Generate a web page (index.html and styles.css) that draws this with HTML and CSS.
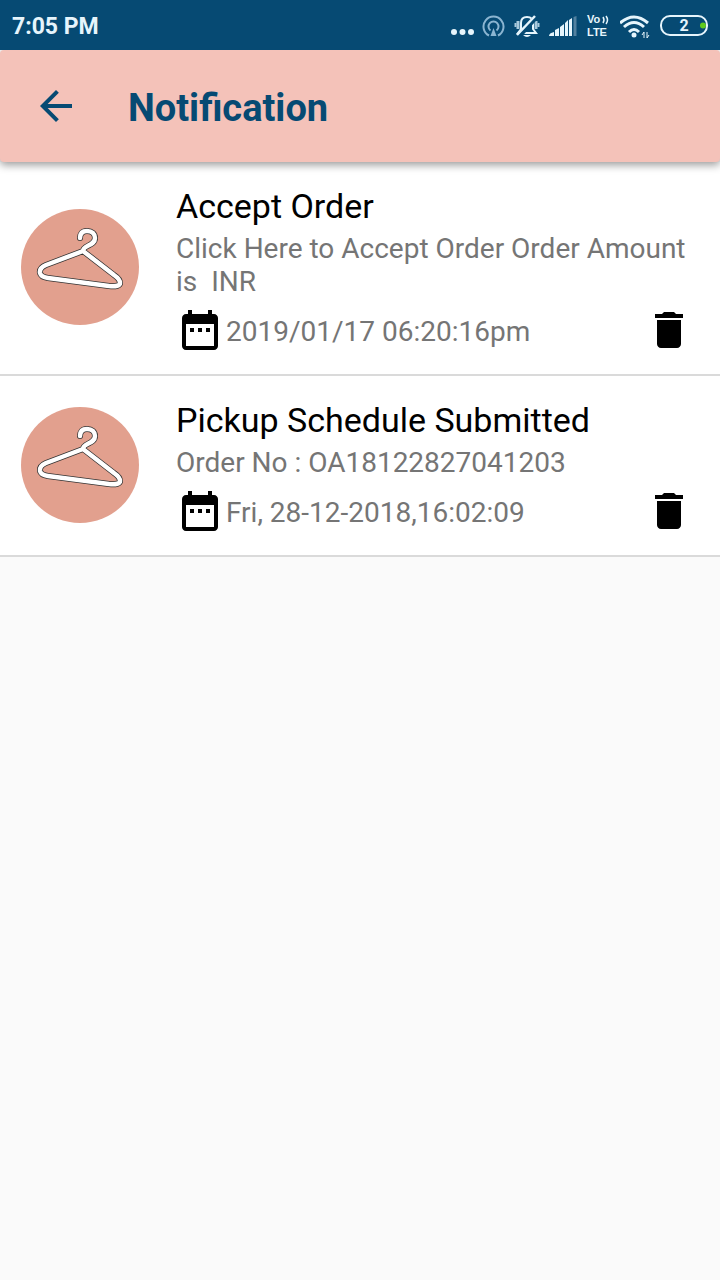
FILE: index.html
```html
<!DOCTYPE html>
<html lang="en">
    <head>
        <meta charset="UTF-8" />
        <meta
            name="viewport"
            content="width=device-width, initial-scale=1.0"
        />
        <title>Notification</title>
        <link rel="stylesheet" href="styles.css">
    </head>
    <body>
        <!-- shared icons -->
        <svg class="symbols" aria-hidden="true">
            <symbol id="hanger" viewBox="0 0 118 118">
                <ellipse cx="59" cy="59" rx="59" ry="58" fill="#e2a08e" />
                <g fill="none" stroke-linejoin="round" stroke-linecap="round">
                    <path d="M59 30C59 26 61 23 66 23C71 23 74 26 74 30C74 38 62 37 62 43L25 57Q18 60 19 65Q20 69 27 70L88 78Q99 79 99 75Q99 71 93 67L62 43" stroke="#333" stroke-width="6" />
                    <path d="M59 30C59 26 61 23 66 23C71 23 74 26 74 30C74 38 62 37 62 43L25 57Q18 60 19 65Q20 69 27 70L88 78Q99 79 99 75Q99 71 93 67L62 43" stroke="#fff" stroke-width="4.500" />
                </g>
            </symbol>
            <symbol id="calendar" viewBox="0 0 24 24">
                <path d="M9 11H7v2h2v-2zm4 0h-2v2h2v-2zm4 0h-2v2h2v-2zm2-7h-1V2h-2v2H8V2H6v2H5c-1.11 0-1.99.9-1.99 2L3 20c0 1.1.89 2 2 2h14c1.1 0 2-.9 2-2V6c0-1.1-.9-2-2-2zm0 16H5V9h14v11z" />
            </symbol>
            <symbol id="trash" viewBox="0 0 24 24">
                <path d="M6 19c0 1.1.9 2 2 2h8c1.1 0 2-.9 2-2V7H6v12zM19 4h-3.500l-1-1h-5l-1 1H5v2h14V4z" />
            </symbol>
        </svg>

        <div class="status-bar">
            <span class="time">7:05 PM</span>
            <div class="status-icons">
                <svg width="24" height="32" viewBox="0 0 24 32" fill="#e6f5fc">
                    <circle cx="4" cy="22" r="3" />
                    <circle cx="12.500" cy="22" r="3" />
                    <circle cx="21" cy="22" r="3" />
                </svg>
                <svg width="24" height="32" viewBox="0 0 24 32" fill="none" stroke="#8bb5d1" stroke-width="2">
                    <path d="M7 25.500A10 10 0 1 1 16 25.500" />
                    <path d="M8.500 20.500A5 5 0 1 1 14.500 20.500" />
                    <path d="M11.500 18l3 8h-6z" fill="#8bb5d1" stroke="none" />
                </svg>
                <svg width="26" height="32" viewBox="0 0 26 32" fill="none" stroke="#e6f5fc" stroke-width="2">
                    <path d="M4 11v8M22 11v8" stroke="#a9cadd" stroke-width="3" />
                    <path d="M1.500 13v4M24.500 13v4" stroke="#a9cadd" />
                    <path d="M4 23H22L19 19V13Q19 7 13 7Q7 7 7 13V19Z" fill="#064a73" />
                    <path d="M9 25h8q-4 4-8 0z" fill="#e6f5fc" stroke="none" />
                    <path d="M5 26L22 7" stroke="#064a73" stroke-width="5" />
                    <path d="M3 25L21 6" stroke-width="2.500" />
                </svg>
                <svg width="30" height="32" viewBox="0 0 30 32" fill="#e6f5fc">
                    <path d="M1 26q0-3 5-4v4zM7 20l4-2v8H7zM12 17l4-3v12h-4zM17 13l3-3v16h-3zM21 10l3-2v18h-3z" />
                    <path d="M25.500 7l3-1v20h-3z" fill="#51809f" />
                </svg>
                <svg class="volte" width="26" height="32" viewBox="0 0 26 32" fill="#e6f5fc">
                    <text x="1" y="13">Vo</text>
                    <text x="1" y="26">LTE</text>
                    <path d="M17 7q2 3 0 6M20 6q3 4 0 8" fill="none" stroke="#e6f5fc" stroke-width="1.500" />
                </svg>
                <svg width="32" height="32" viewBox="0 0 32 32" fill="none" stroke="#e6f5fc" stroke-width="3">
                    <path d="M0 13Q14 1 28 13M4 17Q14 8 24 17M9 22Q14 17 19 22" />
                    <circle cx="14" cy="25" r="2.500" fill="#e6f5fc" stroke="none" />
                    <path d="M24 28v-6l-2 3M27 22v6l2-3" stroke-width="1" />
                </svg>
                <svg class="battery" width="48" height="32" viewBox="0 0 48 32">
                    <rect x="1" y="6" width="46" height="19" rx="9" fill="none" stroke="#e6f5fc" stroke-width="2" />
                    <circle cx="43" cy="15.500" r="3" fill="#5fca1d" />
                    <text x="24" y="21" text-anchor="middle" fill="#e6f5fc">2</text>
                </svg>
            </div>
        </div>

        <header class="toolbar">
            <button class="icon-btn" aria-label="Back">
                <svg class="icon" viewBox="0 0 24 24">
                    <path d="M20 11H7.830l5.590-5.590L12 4l-8 8 8 8 1.410-1.410L7.830 13H20v-2z" />
                </svg>
            </button>
            <h1>Notification</h1>
        </header>

        <main>
            <ul class="list">
                <li class="item">
                    <svg class="avatar"><use href="#hanger" /></svg>
                    <div class="content">
                        <h2>Accept Order</h2>
                        <p>Click Here to Accept Order Order Amount is&nbsp; INR</p>
                        <div class="meta">
                            <svg class="icon"><use href="#calendar" /></svg>
                            <span class="date">2019/01/17 06:20:16pm</span>
                            <button class="icon-btn" aria-label="Delete">
                                <svg class="icon"><use href="#trash" /></svg>
                            </button>
                        </div>
                    </div>
                </li>
                <li class="item">
                    <svg class="avatar"><use href="#hanger" /></svg>
                    <div class="content">
                        <h2>Pickup Schedule Submitted</h2>
                        <p>Order No : OA18122827041203</p>
                        <div class="meta">
                            <svg class="icon"><use href="#calendar" /></svg>
                            <span class="date">Fri, 28-12-2018,16:02:09</span>
                            <button class="icon-btn" aria-label="Delete">
                                <svg class="icon"><use href="#trash" /></svg>
                            </button>
                        </div>
                    </div>
                </li>
            </ul>
        </main>
    </body>
</html>
```

FILE: styles.css
```css
* {
    box-sizing: border-box;
}

body {
    margin: 0;
    background-color: #fafafa;
    font-family: Roboto, sans-serif;
}

h1,
h2,
p,
ul {
    margin: 0;
    padding: 0;
}

.symbols {
    display: none;
}

.status-bar {
    display: flex;
    justify-content: space-between;
    align-items: center;
    height: 50px;
    padding: 2px 12px 0;
    background-color: #064a73;
}

.time {
    color: #e6f5fc;
    font-size: 23px;
    font-weight: 700;
}

.status-icons {
    display: flex;
    gap: 8px;
}

.volte {
    font-family: "Liberation Sans", Arial, sans-serif;
    font-size: 11px;
    font-weight: 700;
}

.battery {
    font-size: 16px;
    font-weight: 700;
}

.toolbar {
    position: relative;
    display: flex;
    align-items: center;
    gap: 48px;
    height: 112px;
    padding: 0 32px;
    border-radius: 4px;
    background-color: #f4c2b9;
    box-shadow: 0 3px 8px rgba(0, 0, 0, 0.4);
    color: #064a73;
    clip-path: inset(0 0 -16px 0);
}

.toolbar h1 {
    padding-top: 4px;
    font-size: 38px;
    font-weight: 700;
    line-height: 48px;
}

.icon-btn {
    display: block;
    padding: 0;
    border: 0;
    background: none;
    color: inherit;
    cursor: pointer;
}

.icon {
    display: block;
    flex: none;
    width: 48px;
    height: 48px;
    fill: currentColor;
}

.list {
    list-style: none;
}

.item {
    display: flex;
    align-items: center;
    padding: 18px 27px 20px 0;
    border-bottom: 2px solid #dadada;
    background-color: #fff;
    color: #000;
}

.avatar {
    flex: none;
    width: 118px;
    height: 118px;
    margin: 0 37px 0 21px;
}

.content {
    flex: 1;
    padding-top: 6px;
}

.content h2 {
    font-size: 34px;
    font-weight: 400;
    line-height: 40px;
}

.content p {
    margin: 6px 0 8px;
    color: #757575;
    font-size: 28px;
    line-height: 33px;
}

.meta {
    display: flex;
    align-items: center;
    gap: 2px;
}

.date {
    flex: 1;
    padding-top: 2px;
    color: #757575;
    font-size: 28px;
    line-height: 33px;
}
```
